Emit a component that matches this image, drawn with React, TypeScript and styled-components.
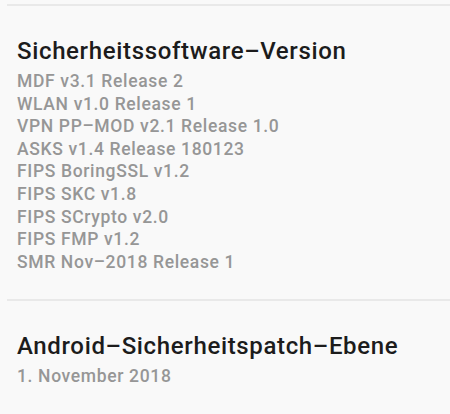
import styled, { createGlobalStyle } from "styled-components";

const GlobalStyle = createGlobalStyle`
  html, body {
    margin: 0;
    padding: 0;
    background: #f9f9f9;
    font-family: Roboto, "Liberation Sans", sans-serif;
  }
`;

type Section = {
  title: string;
  lines: string[];
};

const sections: Section[] = [
  {
    title: "Sicherheitssoftware–Version",
    lines: [
      "MDF v3.1 Release 2",
      "WLAN v1.0 Release 1",
      "VPN PP–MOD v2.1 Release 1.0",
      "ASKS v1.4 Release 180123",
      "FIPS BoringSSL v1.2",
      "FIPS SKC v1.8",
      "FIPS SCrypto v2.0",
      "FIPS FMP v1.2",
      "SMR Nov–2018 Release 1",
    ],
  },
  {
    title: "Android–Sicherheitspatch–Ebene",
    lines: ["1. November 2018"],
  },
];

export default function App() {
  return (
    <>
      <GlobalStyle />
      <Page>
        {sections.map((s) => (
          <div key={s.title}>
            <Divider />
            <Item>
              <Title>{s.title}</Title>
              <Summary>
                {s.lines.map((l) => (
                  <Line key={l}>{l}</Line>
                ))}
              </Summary>
            </Item>
          </div>
        ))}
      </Page>
    </>
  );
}

const Page = styled.div`
  width: 450px;
  height: 414px;
  overflow: hidden;
  padding-top: 4px;
  box-sizing: border-box;
`;

const Divider = styled.div`
  height: 2px;
  margin-left: 7px;
  background: #e9e9e9;
`;

const Item = styled.div`
  padding: 31px 0 26px 17px;
`;

const Title = styled.div`
  font-size: 24px;
  line-height: 28px;
  letter-spacing: 0.65px;
  color: #1c1c1c;
  font-weight: 500;
`;

const Summary = styled.div`
  margin-top: 5px;
  display: flex;
  flex-direction: column;
`;

const Line = styled.div`
  font-size: 17.5px;
  line-height: 22.6px;
  letter-spacing: 0.65px;
  color: #969696;
  font-weight: 500;
`;
